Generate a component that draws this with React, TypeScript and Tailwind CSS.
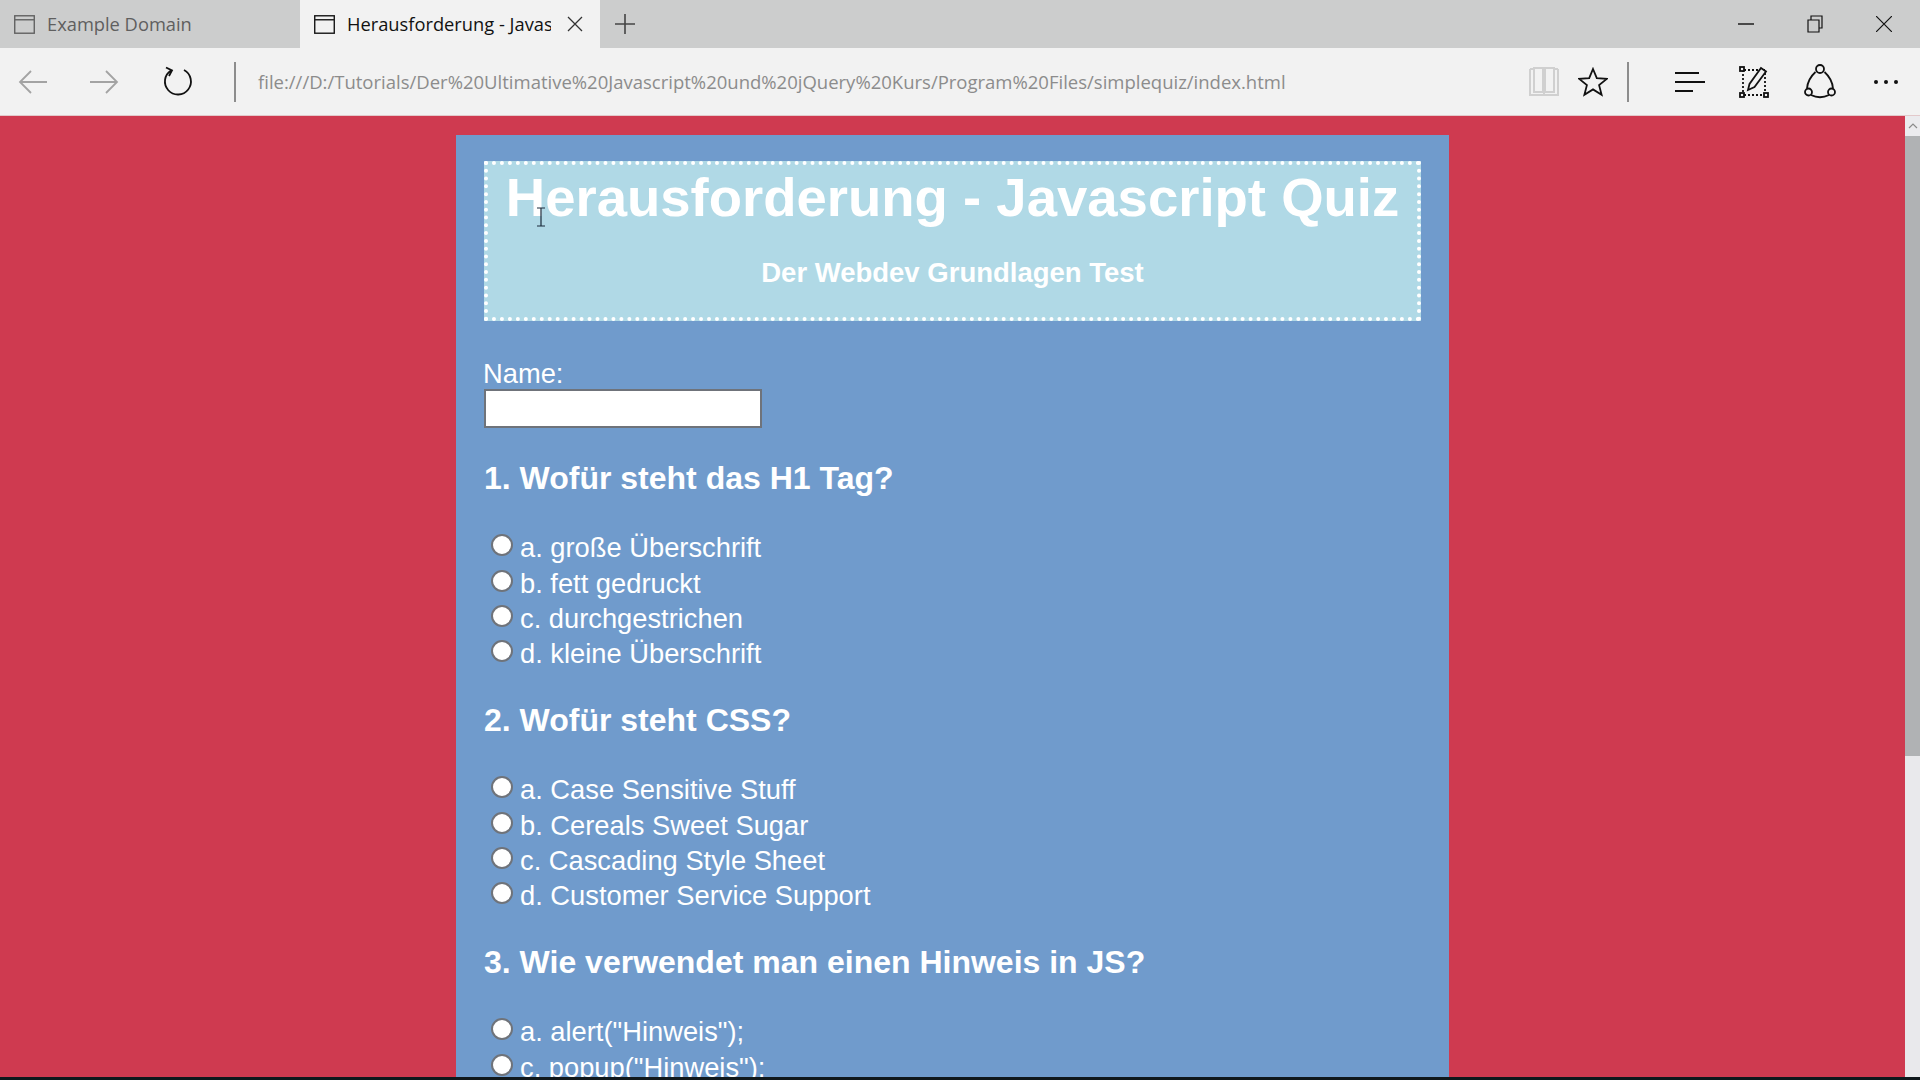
const questions = [
  {
    title: '1. Wofür steht das H1 Tag?',
    answers: ['a. große Überschrift', 'b. fett gedruckt', 'c. durchgestrichen', 'd. kleine Überschrift'],
  },
  {
    title: '2. Wofür steht CSS?',
    answers: ['a. Case Sensitive Stuff', 'b. Cereals Sweet Sugar', 'c. Cascading Style Sheet', 'd. Customer Service Support'],
  },
  {
    title: '3. Wie verwendet man einen Hinweis in JS?',
    answers: ['a. alert("Hinweis");', 'c. popup("Hinweis");', 'd. window("Hinweis");'],
  },
]

const TabIcon = ({ className }: { className: string }) => (
  <svg viewBox="0 0 20 18" fill="none" stroke="currentColor" strokeWidth="1.3" className={className}>
    <rect x="0.7" y="0.7" width="18.6" height="16.6" />
    <path d="M1 4.5h18" />
  </svg>
)

const Toolbar = () => (
  <div className="h-[67px] shrink-0 bg-[#f2f2f2] flex items-center">
    <svg viewBox="0 0 30 26" fill="none" stroke="#a3a3a3" strokeWidth="1.8" className="ml-[18px] w-[30px] h-[26px]">
      <path d="M29 13H2M13 2 2 13l11 11" />
    </svg>
    <svg viewBox="0 0 30 26" fill="none" stroke="#a3a3a3" strokeWidth="1.8" className="ml-[41px] w-[30px] h-[26px]">
      <path d="M1 13h27M17 2l11 11-11 11" />
    </svg>
    <svg viewBox="0 0 30 34" fill="none" stroke="#111" strokeWidth="1.8" className="ml-[44px] w-[30px] h-[34px]">
      <path d="M8 5.5A13 13 0 1 0 21 5M3 2.5l6 3-3 5.5" />
    </svg>
    <div className="ml-[41px] w-[2px] h-[40px] bg-[#8d8d8d]" />
    <div className="ml-[22px] w-[1272px] text-[18.500px] text-[#8c8c8c] font-['Open_Sans',sans-serif] whitespace-nowrap">
      file:///D:/Tutorials/Der%20Ultimative%20Javascript%20und%20jQuery%20Kurs/Program%20Files/simplequiz/index.html
    </div>
    <svg viewBox="0 0 30 30" fill="none" stroke="#d0d0d0" strokeWidth="2" className="-ml-[1px] w-[30px] h-[30px]">
      <path d="M1 2h3M26 2h3M1 2v26h28V2M5 1h9v24H5zM16 1h9v24h-9zM15 25v3" />
    </svg>
    <svg viewBox="0 0 30 30" fill="none" stroke="#111" strokeWidth="1.8" className="ml-[19px] w-[30px] h-[30px]">
      <path d="M15 2l3.8 9.2 10 .7-7.7 6.2 2.5 9.7L15 22.4l-8.6 5.4 2.5-9.700-7.7-6.2 10-.7z" />
    </svg>
    <div className="ml-[19px] w-[2px] h-[40px] bg-[#8d8d8d]" />
    <svg viewBox="0 0 30 22" fill="none" stroke="#111" strokeWidth="2" className="ml-[46px] w-[30px] h-[22px]">
      <path d="M0 2h24M0 11h30M0 20h18" />
    </svg>
    <svg viewBox="0 0 30 34" fill="none" stroke="#111" className="ml-[34px] w-[30px] h-[34px]">
      <path d="M5 5h21M4 5v25M26 8v22M5 30h21" strokeWidth="1.8" strokeDasharray="2 2" />
      <rect x="1" y="2" width="4" height="4" strokeWidth="1.8" fill="#f2f2f2" />
      <rect x="1" y="28" width="4" height="4" strokeWidth="1.8" fill="#f2f2f2" />
      <rect x="25" y="28" width="4" height="4" strokeWidth="1.8" fill="#f2f2f2" />
      <path d="M9 25l1.5-6L22 3l5 3.5L15.500 22z" strokeWidth="1.8" fill="#f2f2f2" />
    </svg>
    <svg viewBox="0 0 32 36" fill="none" stroke="#111" strokeWidth="1.8" className="ml-[35px] w-[32px] h-[36px]">
      <circle cx="16" cy="5" r="4" />
      <circle cx="4.500" cy="28" r="3.500" />
      <circle cx="27.500" cy="28" r="3.500" />
      <path d="M11.500 8C6 13 3.500 18 3 24.500M20.500 8c5.500 5 8 10 8.500 16.500M7 31c6 3 12 3 18 0" />
    </svg>
    <div className="ml-[38px] flex gap-[6px]">
      <div className="w-[4px] h-[4px] rounded-full bg-[#111]" />
      <div className="w-[4px] h-[4px] rounded-full bg-[#111]" />
      <div className="w-[4px] h-[4px] rounded-full bg-[#111]" />
    </div>
  </div>
)

const Scrollbar = () => (
  <div className="w-[15px] shrink-0 bg-[#e9e9ec] flex flex-col">
    <div className="h-[20px] bg-[#ebebee] flex items-center justify-center">
      <svg viewBox="0 0 10 6" fill="none" stroke="#8c8c8c" strokeWidth="1.2" className="w-[10px] h-[6px]">
        <path d="M1 5l4-4 4 4" />
      </svg>
    </div>
    <div className="h-[620px] bg-[#b0b2b4]" />
  </div>
)

export default function App() {
  return (
    <div className="h-screen w-full overflow-hidden flex flex-col bg-[#cf3a50] font-['Liberation_Sans',Arial,sans-serif]">
      <div className="h-[48px] shrink-0 bg-[#cccdcd] flex items-stretch">
        <div className="w-[300px] flex items-center pl-[14px] text-[#5f5f5f]">
          <TabIcon className="w-[21px] h-[19px]" />
          <span className="ml-[12px] text-[18.300px] font-['Open_Sans',sans-serif]">Example Domain</span>
        </div>
        <div className="w-[300px] bg-[#f2f2f2] flex items-center pl-[14px] text-[#111]">
          <TabIcon className="w-[21px] h-[19px]" />
          <span className="ml-[12px] w-[204px] mr-[1px] overflow-hidden whitespace-nowrap text-[18.300px] font-['Open_Sans',sans-serif]">
            Herausforderung - Javascript Quiz
          </span>
          <svg viewBox="0 0 16 16" fill="none" stroke="#333" strokeWidth="1.3" className="ml-[15px] w-[16px] h-[16px]">
            <path d="M1 1l14 14M15 1 1 15" />
          </svg>
        </div>
        <svg viewBox="0 0 20 20" fill="none" stroke="#444" strokeWidth="1.6" className="ml-[15px] self-center w-[20px] h-[20px]">
          <path d="M10 0v20M0 10h20" />
        </svg>
        <div className="ml-auto flex items-center pr-[28px] text-[#111]">
          <svg viewBox="0 0 16 2" stroke="currentColor" strokeWidth="1.4" className="w-[16px] h-[2px]">
            <path d="M0 1h16" />
          </svg>
          <svg viewBox="0 0 16 18" fill="none" stroke="currentColor" strokeWidth="1.2" className="ml-[53px] w-[16px] h-[18px]">
            <path d="M1 5h11v12H1zM4 5V1h11v12h-3" />
          </svg>
          <svg viewBox="0 0 16 16" fill="none" stroke="currentColor" strokeWidth="1.2" className="ml-[53px] w-[16px] h-[16px]">
            <path d="M0 0l16 16M16 0 0 16" />
          </svg>
        </div>
      </div>
      <Toolbar />
      <div className="h-[1px] shrink-0 bg-[#e3c9cb]" />
      <div className="flex-1 min-h-0 flex">
        <div className="flex-1 min-w-0 overflow-hidden relative">
          <div className="w-[993px] mx-auto mt-[19px] px-[28px] pt-[26px] pb-10 bg-[#709bcc] text-white">
            <div className="h-[160px] border-[4px] border-dotted border-white bg-[#b0d9e6] text-center">
              <h1 className="text-[54.500px] leading-[64px] font-bold mt-[1px]">Herausforderung - Javascript Quiz</h1>
              <p className="text-[27.500px] leading-[30px] font-bold mt-[28px]">Der Webdev Grundlagen Test</p>
            </div>
            <div className="text-[27.300px] leading-[31px] mt-[37px] -ml-[1px]">Name:</div>
            <input type="text" className="block w-[278px] h-[39px] bg-white border-2 border-[#6f737a]" />
            {questions.map((q, i) => (
              <div key={i}>
                <h3 className={i === 0 ? 'text-[32px] leading-[36px] font-bold mt-[32px] mb-[35px]' : 'text-[32px] leading-[36px] font-bold mt-[29.500px] mb-[35px]'}>{q.title}</h3>
                {q.answers.map((a, j) => (
                  <label key={j} className="flex items-center h-[35.400px] text-[27.300px]">
                    <input type="radio" name={'q' + i} className="appearance-none ml-[7px] mr-[7px] -mt-[7px] w-[22px] h-[22px] rounded-full bg-white border-2 border-[#6f737a]" />
                    {a}
                  </label>
                ))}
              </div>
            ))}
          </div>
          <svg viewBox="0 0 10 20" fill="none" stroke="#1a2a3a" strokeWidth="1.2" className="absolute left-[536px] top-[91px] w-[10px] h-[20px]">
            <path d="M1 1h8M5 1v18M1 19h8" />
          </svg>
        </div>
        <Scrollbar />
      </div>
      <div className="h-[3px] shrink-0 bg-[#10181c]" />
    </div>
  )
}
